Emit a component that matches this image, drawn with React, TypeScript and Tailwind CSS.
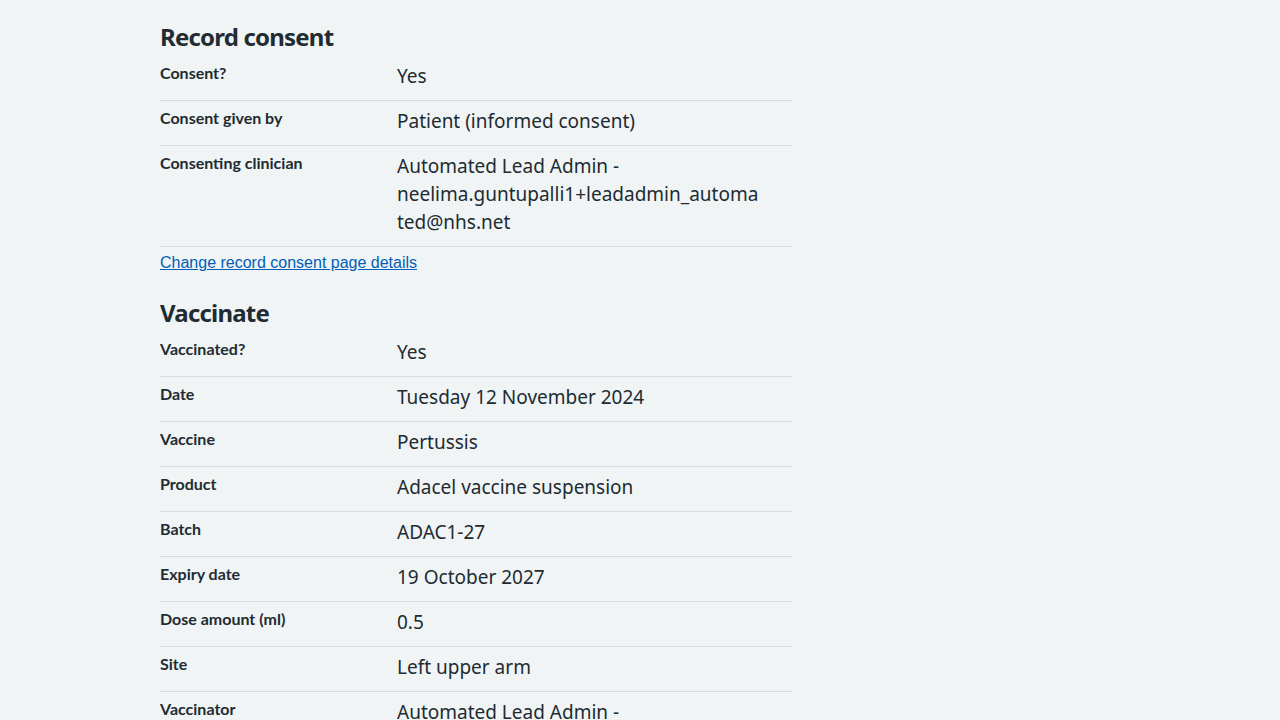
import React from 'react';

type Row = { label: string; value: string[] };

const consentRows: Row[] = [
  { label: 'Consent?', value: ['Yes'] },
  { label: 'Consent given by', value: ['Patient (informed consent)'] },
  {
    label: 'Consenting clinician',
    value: ['Automated Lead Admin -', 'neelima.guntupalli1+leadadmin_automa', 'ted@nhs.net'],
  },
];

const vaccinateRows: Row[] = [
  { label: 'Vaccinated?', value: ['Yes'] },
  { label: 'Date', value: ['Tuesday 12 November 2024'] },
  { label: 'Vaccine', value: ['Pertussis'] },
  { label: 'Product', value: ['Adacel vaccine suspension'] },
  { label: 'Batch', value: ['ADAC1-27'] },
  { label: 'Expiry date', value: ['19 October 2027'] },
  { label: 'Dose amount (ml)', value: ['0.5'] },
  { label: 'Site', value: ['Left upper arm'] },
  {
    label: 'Vaccinator',
    value: ['Automated Lead Admin -', 'neelima.guntupalli1+leadadmin_automa', 'ted@nhs.net'],
  },
];

function SummaryList({ rows }: { rows: Row[] }) {
  return (
    <dl>
      {rows.map((row) => (
        <div key={row.label} className="flex border-b border-[#d8dde0] pt-[6px] pb-[10px]">
          <dt className="w-[237px] shrink-0 font-['Lato',sans-serif] text-[16px] leading-[22px] font-bold">
            {row.label}
          </dt>
          <dd className="flex-1 text-[19px] leading-[28px]">
            {row.value.map((line, i) => (
              <span key={i} className="block">
                {line}
              </span>
            ))}
          </dd>
        </div>
      ))}
    </dl>
  );
}

export default function App() {
  return (
    <div className="min-h-screen bg-[#f0f4f5] text-[#212b32] font-['Noto_Sans',sans-serif]">
      <div className="ml-[160px] w-[632px] pt-[21px]">
        <h2 className="text-[24px] leading-[32px] font-bold tracking-[-0.8px] mb-[3px]">Record consent</h2>
        <SummaryList rows={consentRows} />
        <a
          href="#"
          className="block mt-[4px] text-[16px] leading-[24px] text-[#005eb8] underline font-['Liberation_Sans',sans-serif]"
        >
          Change record consent page details
        </a>

        <h2 className="mt-[22px] text-[24px] leading-[32px] font-bold tracking-[-0.8px] mb-[3px]">Vaccinate</h2>
        <SummaryList rows={vaccinateRows} />
      </div>
    </div>
  );
}
